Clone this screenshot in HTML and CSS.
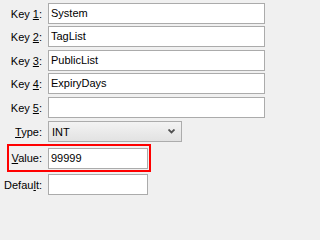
FILE: index.html
```html
<!DOCTYPE html>
<html>
<head>
<meta charset="utf-8">
<link rel="stylesheet" href="styles.css">
</head>
<body>
<div class="form">
  <div class="row r1"><span class="lbl">Key <u>1</u>:</span><div class="field">System</div></div>
  <div class="row r2"><span class="lbl">Key <u>2</u>:</span><div class="field">TagList</div></div>
  <div class="row r3"><span class="lbl">Key <u>3</u>:</span><div class="field">PublicList</div></div>
  <div class="row r2"><span class="lbl">Key <u>4</u>:</span><div class="field">ExpiryDays</div></div>
  <div class="row r3"><span class="lbl">Key <u>5</u>:</span><div class="field"></div></div>
  <div class="row r3"><span class="lbl"><u>T</u>ype:</span>
    <div class="select"><span>INT</span>
      <svg class="chev" width="7" height="5" viewBox="0 0 7 5"><path d="M0.5 0.5 L3.5 3.5 L6.5 0.5" fill="none" stroke="#505050" stroke-width="1.8"/></svg>
    </div>
  </div>
  <div class="row hl"><span class="lbl"><u>V</u>alue:</span><div class="field small">99999</div></div>
  <div class="row r2"><span class="lbl">Defau<u>l</u>t:</span><div class="field small"></div></div>
</div>
</body>
</html>
```
FILE: styles.css
```css
html, body {
  margin: 0;
  padding: 0;
  background: #f0f0f0;
}
body {
  font-family: "Liberation Sans", Arial, sans-serif;
  font-size: 11px;
  color: #000;
  width: 267px;
  height: 200px;
  overflow: hidden;
}
.form {
  display: flex;
  flex-direction: column;
  padding-top: 3px;
}
.row {
  display: flex;
  align-items: center;
  height: 21px;
}
.r2 { margin-top: 2px; }
.r3 { margin-top: 3px; }
.lbl {
  width: 42px;
  margin-right: 6px;
  text-align: right;
  white-space: nowrap;
  flex: none;
}
.lbl u {
  text-underline-offset: 1px;
}
.field {
  box-sizing: border-box;
  width: 217px;
  height: 21px;
  border: 1px solid #ababab;
  background: #fff;
  padding-left: 2px;
  line-height: 19px;
  white-space: nowrap;
}
.field.small {
  width: 100px;
}
.select {
  box-sizing: border-box;
  width: 134px;
  height: 21px;
  border: 1px solid #acacac;
  background: linear-gradient(to bottom, #f3f3f3, #e2e2e2);
  display: flex;
  align-items: center;
  justify-content: space-between;
  padding: 0 6px 0 3px;
}
.chev {
  display: block;
}
.hl {
  box-sizing: border-box;
  margin-top: 2px;
  margin-left: 7px;
  width: 144px;
  height: 28px;
  border: 2px solid #ff0000;
  align-items: flex-start;
  padding-top: 2px;
}
.hl .lbl {
  width: 33px;
  line-height: 21px;
}
.hl .field {
  width: 100px;
}
```
